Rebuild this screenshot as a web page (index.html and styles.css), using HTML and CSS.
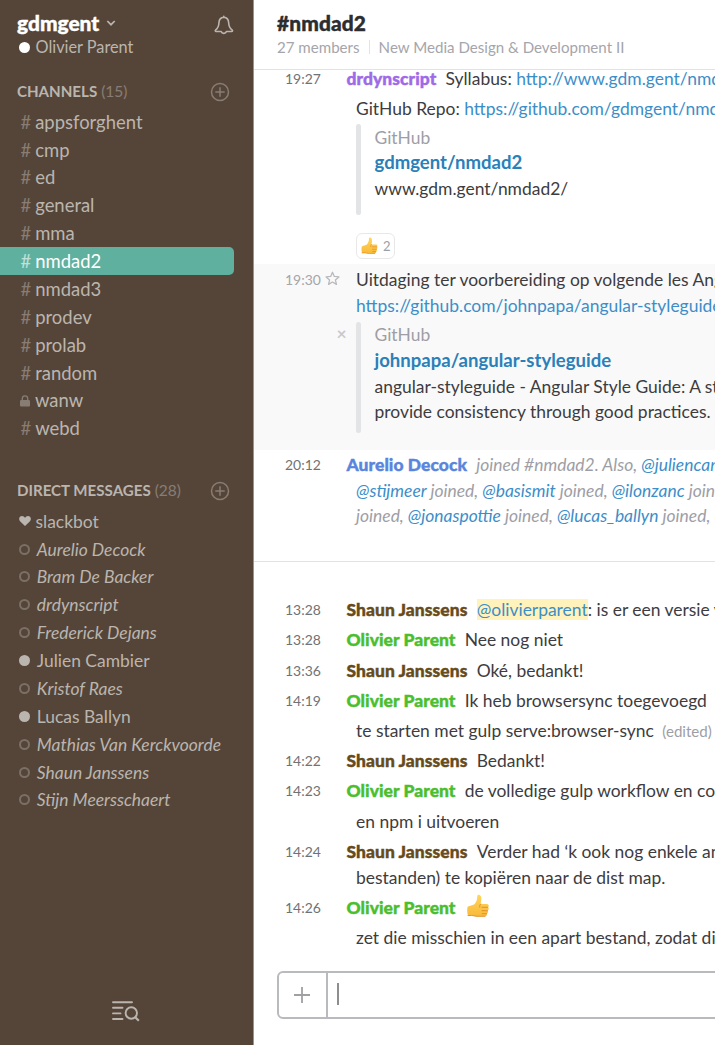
FILE: index.html
```html
<!DOCTYPE html>
<html lang="nl">
<head>
<meta charset="utf-8">
<title>#nmdad2 | gdmgent</title>
<link rel="stylesheet" href="styles.css">
</head>
<body>
<svg class="defs" width="0" height="0" aria-hidden="true">
  <defs>
    <linearGradient id="skin" x1="0" y1="0" x2="0" y2="1">
      <stop offset="0" stop-color="#ffd65c"/><stop offset="1" stop-color="#f9b93b"/>
    </linearGradient>
    <symbol id="thumb" viewBox="0 0 22 23">
      <path d="M.6 12.8C3 11.6 5.500 11.300 7.400 10.200C9.600 8 10.200 5 10.300 1.900C10.500.300 12.900.200 13.900 2.300C14.800 4.400 14.300 7.500 13.500 10H19.800C22 10 22.300 12.700 20.800 13.300C22.300 14 21.900 16.300 20.500 16.700C21.600 17.500 21 19.300 19.700 19.700C20.300 21 19.400 22.300 18 22.300H11C8 22.400 6.500 21.500 4.500 21.500H1C0 19 0 15.500.6 12.800Z" fill="url(#skin)"/>
      <path d="M13.500 10Q12.200 11.600 12.700 13.200M20.800 13.300H15M20.500 16.700H15M19.700 19.700H15.200M1 21.500H4.500C6.500 21.500 8 22.400 11 22.300H18" fill="none" stroke="#de8d22" stroke-width=".9" stroke-linecap="round"/>
    </symbol>
    <symbol id="add" viewBox="0 0 20 20">
      <circle cx="10" cy="10" r="8.500" fill="none" stroke="currentColor" stroke-width="1.500"/>
      <path d="M10 5.300v9.400M5.300 10h9.400" stroke="currentColor" stroke-width="1.500"/>
    </symbol>
  </defs>
</svg>
<div class="app">
  <aside class="sidebar">
    <header class="team">
      <div class="team-row">
        <span class="team-name">gdmgent</span>
        <svg class="chevron" viewBox="0 0 10 8"><path d="M1.300 2 5 5.700 8.700 2" fill="none" stroke="currentColor" stroke-width="1.700"/></svg>
        <svg class="bell" viewBox="0 0 20 20"><path d="M9.800 1.300V2.300C6.300 2.600 5 5 4.900 8C4.800 12 3.600 13.500 1.500 15.200C1 15.800 1.300 16.500 2 16.500H7.200C8 19 11.600 19 12.400 16.500H17.800C18.500 16.500 18.800 15.800 18.300 15.200C16 13.500 14.800 12 14.700 8C14.600 5 13.300 2.600 9.800 2.300" fill="none" stroke="currentColor" stroke-width="1.600" stroke-linejoin="round" stroke-linecap="round"/></svg>
      </div>
      <div class="me"><i class="dot"></i><span>Olivier Parent</span></div>
    </header>
    <section class="group channels">
      <h2><b>CHANNELS</b> <span class="count">(15)</span><svg class="add"><use href="#add"/></svg></h2>
      <ul>
        <li><i class="hash">#</i>appsforghent</li>
        <li><i class="hash">#</i>cmp</li>
        <li><i class="hash">#</i>ed</li>
        <li><i class="hash">#</i>general</li>
        <li><i class="hash">#</i>mma</li>
        <li class="active"><i class="hash">#</i>nmdad2</li>
        <li><i class="hash">#</i>nmdad3</li>
        <li><i class="hash">#</i>prodev</li>
        <li><i class="hash">#</i>prolab</li>
        <li><i class="hash">#</i>random</li>
        <li><svg class="lock" viewBox="0 0 10 12"><rect x="0" y="5" width="10" height="6.500" rx="1.200" fill="currentColor"/><path d="M2.300 5.500V3.600a2.700 2.700 0 0 1 5.400 0V5.500" fill="none" stroke="currentColor" stroke-width="1.300"/></svg>wanw</li>
        <li><i class="hash">#</i>webd</li>
      </ul>
    </section>
    <section class="group people">
      <h2><b>DIRECT MESSAGES</b> <span class="count">(28)</span><svg class="add"><use href="#add"/></svg></h2>
      <ul>
        <li><svg class="heart" viewBox="0 0 12 10"><path d="M6 10 1 5.200C-1 2.500.8 0 3 0Q5 0 6 1.800Q7 0 9 0C11.200 0 13 2.500 11 5.200Z" fill="currentColor"/></svg>slackbot</li>
        <li class="away"><i class="ring"></i><span>Aurelio Decock</span></li>
        <li class="away"><i class="ring"></i><span>Bram De Backer</span></li>
        <li class="away"><i class="ring"></i><span>drdynscript</span></li>
        <li class="away"><i class="ring"></i><span>Frederick Dejans</span></li>
        <li class="online"><i class="dot"></i><span>Julien Cambier</span></li>
        <li class="away"><i class="ring"></i><span>Kristof Raes</span></li>
        <li class="online"><i class="dot"></i><span>Lucas Ballyn</span></li>
        <li class="away"><i class="ring"></i><span>Mathias Van Kerckvoorde</span></li>
        <li class="away"><i class="ring"></i><span>Shaun Janssens</span></li>
        <li class="away"><i class="ring"></i><span>Stijn Meersschaert</span></li>
      </ul>
    </section>
    <footer class="switcher"><svg viewBox="0 0 30 22"><path d="M2 2.200H21M2 7.800H11.500M2 13.400H9.500M2 19H11.500" stroke="currentColor" stroke-width="1.900" stroke-linecap="round"/><circle cx="20.300" cy="13" r="5.700" fill="none" stroke="currentColor" stroke-width="1.900"/><path d="m24.500 17.500 3.300 3.300" stroke="currentColor" stroke-width="2.200"/></svg></footer>
  </aside>
  <main class="main">
    <header class="topbar">
      <h1>#nmdad2</h1>
      <p><span>27 members</span><span class="topic">New Media Design &amp; Development II</span></p>
    </header>
    <div class="messages">
      <div class="msg"><time>19:27</time><p><b class="dr">drdynscript</b>Syllabus: <a>http://www.gdm.gent/nmd</a></p></div>
      <div class="msg tight"><time></time><p>GitHub Repo: <a>https://github.com/gdmgent/nmd</a></p></div>
      <div class="attachment first"><p class="site">GitHub</p><p><a class="title">gdmgent/nmdad2</a></p><p>www.gdm.gent/nmdad2/</p></div>
      <div class="reaction"><svg><use href="#thumb"/></svg><span>2</span></div>
      <div class="hover">
        <div class="msg tight"><time>19:30</time><svg class="star" viewBox="0 0 14 14"><path d="m7 1.200 1.700 3.900 4.300.4-3.300 2.800 1 4.200L7 10.300l-3.700 2.200 1-4.200L1 5.500l4.300-.4Z" fill="none" stroke="currentColor" stroke-width="1.200" stroke-linejoin="round"/></svg><p>Uitdaging ter voorbereiding op volgende les Ang<br><a>https://github.com/johnpapa/angular-styleguide</a></p></div>
        <div class="attachment second"><span class="close">×</span><p class="site">GitHub</p><p><a class="title">johnpapa/angular-styleguide</a></p><p>angular-styleguide - Angular Style Guide: A st</p><p>provide consistency through good practices.</p></div>
      </div>
      <div class="msg joins"><time>20:12</time><p><b class="au">Aurelio Decock</b>joined #nmdad2. Also, <a>@juliencam</a><br><a>@stijmeer</a> joined, <a>@basismit</a> joined, <a>@ilonzanc</a> join<br>joined, <a>@jonaspottie</a> joined, <a>@lucas_ballyn</a> joined, <a>@</a></p></div>
      <hr>
      <div class="msg"><time>13:28</time><p><b class="sh">Shaun Janssens</b><a class="mention">@olivierparent</a>: is er een versie v</p></div>
      <div class="msg"><time>13:28</time><p><b class="ol">Olivier Parent</b>Nee nog niet</p></div>
      <div class="msg"><time>13:36</time><p><b class="sh">Shaun Janssens</b>Oké, bedankt!</p></div>
      <div class="msg"><time>14:19</time><p><b class="ol">Olivier Parent</b>Ik heb browsersync toegevoegd</p></div>
      <div class="msg"><time></time><p>te starten met gulp serve:browser-sync <small>(edited)</small></p></div>
      <div class="msg"><time>14:22</time><p><b class="sh">Shaun Janssens</b>Bedankt!</p></div>
      <div class="msg"><time>14:23</time><p><b class="ol">Olivier Parent</b>de volledige gulp workflow en co</p></div>
      <div class="msg"><time></time><p>en npm i uitvoeren</p></div>
      <div class="msg"><time>14:24</time><p><b class="sh">Shaun Janssens</b>Verder had ‘k ook nog enkele an<br>bestanden) te kopiëren naar de dist map.</p></div>
      <div class="msg"><time>14:26</time><p><b class="ol">Olivier Parent</b><svg class="emoji"><use href="#thumb"/></svg></p></div>
      <div class="msg"><time></time><p>zet die misschien in een apart bestand, zodat di</p></div>
    </div>
    <div class="composer"><span class="plus"><svg viewBox="0 0 16 16"><path d="M8 0v16M0 8h16" stroke="currentColor" stroke-width="1.800"/></svg></span><span class="field"><i class="caret"></i></span></div>
  </main>
</div>
</body>
</html>
```
FILE: styles.css
```css
* { box-sizing: border-box; }
body, h1, h2, p, ul { margin: 0; padding: 0; }
body { font-family: Lato, sans-serif; overflow: hidden; }
svg { display: block; }
.defs { position: absolute; }
.app { display: grid; grid-template-columns: 254px 461px; width: 715px; height: 1045px; overflow: hidden; }

/* Sidebar */
.sidebar { display: flex; flex-direction: column; background: #554538; color: #bbb5af; border-right: 1px solid #9c948b; font-size: 18.450px; min-width: 0; }
.team { height: 76px; padding: 10px 0 0 17px; }
.team-row { display: flex; align-items: center; height: 26px; color: #bbb5af; }
.team-name { color: #fff; font-weight: 900; font-size: 20.900px; line-height: 26px; -webkit-text-stroke: .4px; }
.chevron { width: 10px; height: 8px; margin-left: 6.500px; }
.bell { width: 20px; height: 20px; margin: 4px 19px 0 auto; }
.me { display: flex; align-items: center; height: 20px; font-size: 16.300px; }
.dot { width: 11px; height: 11px; border-radius: 50%; background: currentColor; flex: none; }
.me .dot { background: #fff; margin: 2px 5.500px 0 2px; }
.group h2 { display: flex; align-items: center; height: 30px; padding-left: 17px; font-size: 15.100px; font-weight: 400; white-space: pre; }
.count { color: #887d74; margin-left: 4px; font-size: 15.500px; }
.add { width: 20px; height: 20px; margin: 1px 23.500px 0 auto; color: #887d74; }
.group ul { list-style: none; }
.group li { display: flex; align-items: center; height: 27.880px; padding: 1px 0 0 20.500px; white-space: nowrap; }
.channels ul { padding-top: 1.300px; }
.people { margin-top: 33.500px; }
.people ul { padding-top: 1.500px; }
.hash { width: 14.700px; font-style: normal; color: #887d74; }
.lock { width: 10px; height: 12px; margin: 2px 5.500px 0 -1px; color: #887d74; }
.heart { width: 12px; height: 10px; margin: 0 5px 0 -2px; }
.group .active { width: 234px; background: #5fb09f; border-radius: 0 5px 5px 0; color: #fff; }
.active .hash { color: #c0e1da; }
.people li { font-size: 17.440px; }
.people .online .dot { margin: 0 7.300px 0 -2px; }
.away { font-style: italic; }
.ring { width: 11px; height: 11px; border: 2px solid #7b7065; border-radius: 50%; margin: 0 7.300px 0 -2px; flex: none; }
.switcher { margin-top: auto; height: 47px; padding-left: 110.500px; }
.switcher svg { width: 30px; height: 22px; margin-top: 2px; }

/* Channel view */
.main { display: flex; flex-direction: column; min-width: 0; overflow: hidden; }
.topbar { flex: none; height: 70px; padding: 10px 0 0 23px; background: #fff; border-bottom: 1px solid #e2e2e2; position: relative; z-index: 1; white-space: nowrap; }
.topbar h1 { font-size: 20.900px; line-height: 26px; font-weight: 900; color: #2c2d30; letter-spacing: .1px; -webkit-text-stroke: .4px; }
.topbar p { display: flex; align-items: center; height: 22px; font-size: 15.100px; color: #a5a5ab; }
.topic { border-left: 1px solid #e3e3e6; margin-left: 9px; padding-left: 9px; line-height: 14px; }
.messages { flex: none; height: 900px; margin-top: -4.300px; color: #3d3c40; font-size: 17.440px; line-height: 25.580px; white-space: nowrap; }
.msg { display: flex; padding-left: 31px; margin-bottom: 4.650px; }
.msg.tight { margin-bottom: 0; }
.msg time { width: 61px; flex: none; font-size: 13.950px; color: #717274; }
.msg p { padding-left: 10px; text-indent: -9.500px; }
.msg time:empty + p { text-indent: 0; }
.msg b { font-weight: 900; margin-right: 9.200px; letter-spacing: .06px; -webkit-text-stroke: .4px; }
.msg small { font-size: 15.100px; line-height: 1; color: #9e9ea6; margin-left: 4px; }
a { color: #3c8ec9; }
.dr { color: #9e6ae8; }
.au { color: #5a85dc; font-style: normal; }
.sh { color: #674b1b; }
.ol { color: #4bbe2e; }
.attachment { position: relative; margin-left: 102px; padding-left: 13px; }
.attachment::before { content: ""; position: absolute; left: 0; top: 0; bottom: 0; width: 4.500px; border-radius: 3px; background: #e3e4e6; }
.attachment p { height: 25.580px; padding-left: 5.500px; }
.first { margin-top: 2.800px; padding-top: .6px; height: 91px; }
.site { color: #9e9ea6; }
.title { font-size: 18.560px; line-height: 1; font-weight: 700; color: #2a80b9; }
.reaction { display: flex; align-items: center; width: 39px; height: 26px; margin: 18px 0 4.700px 102px; padding-left: 4px; border: 1px solid #e8e8e8; border-radius: 6px; font-size: 13px; color: #9e9ea6; }
.reaction svg { width: 17px; height: 17px; margin: -2px 5px 0 0; }
.hover { height: 186px; padding-top: 3.400px; margin-bottom: 2px; background: #f9f9f9; }
.hover time { width: 40px; color: #a5a5ab; }
.hover .msg p { padding-left: 16px; text-indent: 0; }
.star { flex: none; width: 15px; height: 15px; margin: 4px 0 0; color: #b9b9bd; }
.second { margin-top: 3.500px; padding-top: .4px; height: 111px; }
.close { position: absolute; left: -19.500px; top: -1.500px; color: #c9c9cc; font-weight: 700; }
.joins { font-style: italic; color: #9e9ea6; height: 77px; margin: 0; }
.joins time { font-style: normal; }
hr { flex: none; width: 100%; height: 1px; margin: 31.700px 0 35.500px; border: 0; background: #e2e2e2; }
.mention { background: #fff2bb; }
.emoji { display: inline-block; width: 22px; height: 23px; vertical-align: 2px; margin: -5px 0 -5px 2px; }
.composer { display: flex; flex: none; width: 480px; height: 48px; margin: 5.500px 0 0 23px; border: 2px solid #b9babd; border-radius: 6px; }
.plus { width: 48.500px; border-right: 2px solid #b9babd; display: grid; place-items: center; color: #a0a0a2; }
.plus svg { width: 16px; height: 16px; }
.field { padding: 10px 0 0 9.500px; }
.caret { display: block; width: 2px; height: 22px; background: #8e8e90; }
```
